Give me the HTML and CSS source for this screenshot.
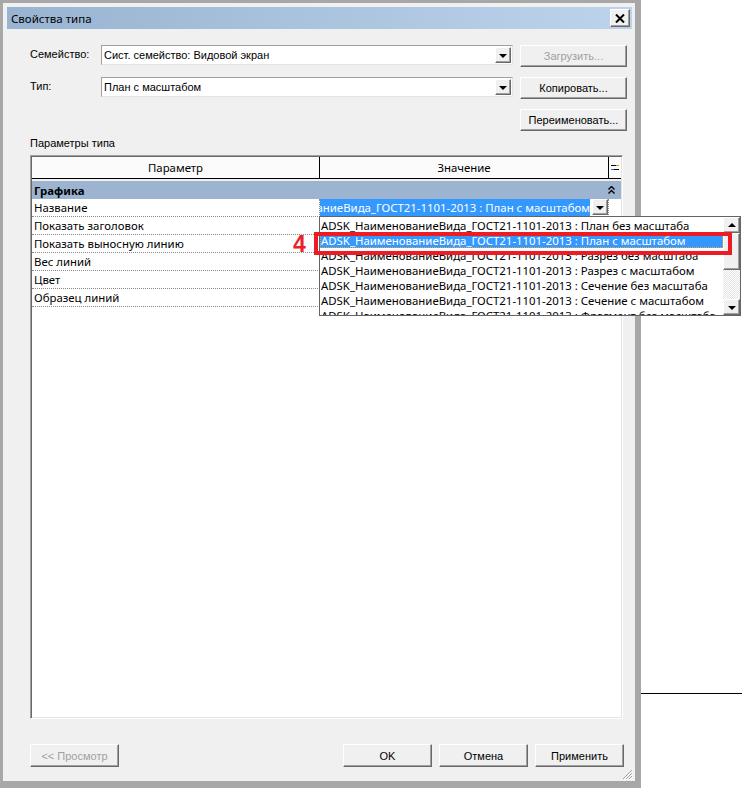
FILE: index.html
```html
<!DOCTYPE html>
<html lang="ru">
<head>
  <meta charset="UTF-8">
  <title>Свойства типа</title>
  <link rel="stylesheet" href="styles.css">
</head>
<body>
  <div class="page">
    <div class="dialog">
      <div class="titlebar">
        <span class="title">Свойства типа</span>
        <button class="close-btn" aria-label="Закрыть">
          <svg width="10" height="9" viewBox="0 0 10 9"><path d="M1 0.5 L9 8.5 M9 0.5 L1 8.5" stroke="#000" stroke-width="2"/></svg>
        </button>
      </div>

      <div class="dialog-body">
        <div class="form-grid">
          <label class="field-label">Семейство:</label>
          <div class="combo">
            <span class="combo-text">Сист. семейство: Видовой экран</span>
            <span class="combo-arrow"><i class="tri-down"></i></span>
          </div>
          <button class="btn" disabled>Загрузить...</button>

          <label class="field-label">Тип:</label>
          <div class="combo">
            <span class="combo-text">План с масштабом</span>
            <span class="combo-arrow"><i class="tri-down"></i></span>
          </div>
          <button class="btn">Копировать...</button>

          <span></span>
          <span></span>
          <button class="btn">Переименовать...</button>
        </div>

        <div class="section-label">Параметры типа</div>

        <div class="prop-grid">
          <div class="grid-head">
            <div class="head-cell">Параметр</div>
            <div class="head-cell">Значение</div>
            <div class="head-cell head-eq">
              <svg width="8" height="7" viewBox="0 0 8 7">
                <rect x="0" y="1" width="8" height="1" fill="#000"/>
                <rect x="5" y="1" width="3" height="1" fill="#e08a1e"/>
                <rect x="0" y="5" width="8" height="1" fill="#000"/>
                <rect x="0" y="5" width="3" height="1" fill="#2a6ad8"/>
              </svg>
            </div>
          </div>
          <div class="grid-gap"></div>
          <div class="group-row">
            <span class="group-name">Графика</span>
            <svg class="collapse" width="7" height="8" viewBox="0 0 7 8">
              <path d="M0.5 3.5 L3.5 0.5 L6.5 3.5 M0.5 7.5 L3.5 4.5 L6.5 7.5" stroke="#000" stroke-width="1.4" fill="none"/>
            </svg>
          </div>

          <div class="prop-row">
            <div class="prop-name">Название</div>
            <div class="prop-value">
              <div class="value-edit"><span>ADSK_НаименованиеВида_ГОСТ21-1101-2013 : План с масштабом</span></div>
              <span class="value-arrow"><i class="tri-down"></i></span>
            </div>
            <div></div>
          </div>
          <div class="prop-row">
            <div class="prop-name">Показать заголовок</div>
            <div class="prop-value"></div>
            <div></div>
          </div>
          <div class="prop-row">
            <div class="prop-name">Показать выносную линию</div>
            <div class="prop-value"></div>
            <div></div>
          </div>
          <div class="prop-row">
            <div class="prop-name">Вес линий</div>
            <div class="prop-value"></div>
            <div></div>
          </div>
          <div class="prop-row">
            <div class="prop-name">Цвет</div>
            <div class="prop-value"></div>
            <div></div>
          </div>
          <div class="prop-row">
            <div class="prop-name">Образец линий</div>
            <div class="prop-value"></div>
            <div></div>
          </div>
        </div>

        <div class="footer">
          <button class="btn btn-wide" disabled>&lt;&lt; Просмотр</button>
          <div class="footer-right">
            <button class="btn btn-wide">OK</button>
            <button class="btn btn-wide">Отмена</button>
            <button class="btn btn-wide">Применить</button>
          </div>
        </div>
      </div>

      <svg class="grip" width="11" height="11" viewBox="0 0 11 11">
        <path d="M10 1 L1 10 M10 4 L4 10 M10 7 L7 10" stroke="#a0a0a0" stroke-width="1"/>
        <path d="M11 2 L2 11 M11 5 L5 11 M11 8 L8 11" stroke="#fff" stroke-width="1"/>
      </svg>
    </div>

    <div class="side">
      <div class="side-line"></div>
    </div>
  </div>

  <!-- open drop-down of the "Название" value -->
  <div class="dropdown-list">
    <div class="list-items">
      <div class="list-item">ADSK_НаименованиеВида_ГОСТ21-1101-2013 : План без масштаба</div>
      <div class="list-item selected">ADSK_НаименованиеВида_ГОСТ21-1101-2013 : План с масштабом</div>
      <div class="list-item">ADSK_НаименованиеВида_ГОСТ21-1101-2013 : Разрез без масштаба</div>
      <div class="list-item">ADSK_НаименованиеВида_ГОСТ21-1101-2013 : Разрез с масштабом</div>
      <div class="list-item">ADSK_НаименованиеВида_ГОСТ21-1101-2013 : Сечение без масштаба</div>
      <div class="list-item">ADSK_НаименованиеВида_ГОСТ21-1101-2013 : Сечение с масштабом</div>
      <div class="list-item">ADSK_НаименованиеВида_ГОСТ21-1101-2013 : Фрагмент без масштаба</div>
    </div>
    <div class="scrollbar">
      <span class="scroll-btn"><i class="tri-up"></i></span>
      <span class="scroll-thumb"></span>
      <span class="scroll-track"></span>
      <span class="scroll-btn"><i class="tri-down"></i></span>
    </div>
  </div>

  <div class="callout-box"></div>
  <div class="callout-num">4</div>
</body>
</html>
```

FILE: styles.css
```css
body {
  margin: 0;
  width: 742px;
  height: 788px;
  overflow: hidden;
  position: relative;
  background: #fff;
  font-family: 'Liberation Sans', Arial, sans-serif;
  font-size: 11px;
  color: #000;
}

.page {
  display: flex;
}

.dialog {
  position: relative;
  width: 641px;
  height: 788px;
  box-sizing: border-box;
  display: flex;
  flex-direction: column;
  background: #f0f0f0;
  border-style: solid;
  border-color: #a7a7a7;
  border-width: 3px 6px 7px 3px;
}

.titlebar {
  height: 22px;
  margin: 4px 3px 0 4px;
  display: flex;
  align-items: center;
  justify-content: space-between;
  background: linear-gradient(to right, #99b4d1, #bcd3eb);
}

.title {
  padding-left: 4px;
  font-family: 'Noto Sans', sans-serif;
  font-size: 11.5px;
}

.close-btn {
  width: 20px;
  height: 18px;
  margin-right: 2px;
  padding: 0;
  display: flex;
  align-items: center;
  justify-content: center;
  background: #f0f0f0;
  border: 1px solid;
  border-color: #fff #696969 #696969 #fff;
  box-shadow: inset -1px -1px #a0a0a0;
}

.dialog-body {
  flex: 1;
  display: flex;
  flex-direction: column;
  padding: 16px 0 0 27px;
}

/* top fields */
.form-grid {
  display: grid;
  grid-template-columns: 71px 419px 107px;
  grid-auto-rows: 22px;
  row-gap: 10px;
  align-items: start;
}

.field-label {
  line-height: 18px;
}

.combo {
  width: 412px;
  height: 20px;
  box-sizing: border-box;
  display: flex;
  align-items: center;
  justify-content: space-between;
  background: #fff;
  border: 1px solid;
  border-color: #a0a0a0 #e3e3e3 #e3e3e3 #a0a0a0;
}

.combo-text {
  padding-left: 2px;
}

.combo-arrow,
.value-arrow,
.scroll-btn {
  display: flex;
  align-items: center;
  justify-content: center;
  box-sizing: border-box;
  background: #f0f0f0;
  border: 1px solid;
  border-color: #fff #696969 #696969 #fff;
  box-shadow: inset -1px -1px #a0a0a0;
}

.combo-arrow {
  width: 16px;
  height: 16px;
  margin-right: 1px;
}

.tri-down {
  width: 0;
  height: 0;
  border-left: 4px solid transparent;
  border-right: 4px solid transparent;
  border-top: 4px solid #000;
  margin-top: 1px;
}

.tri-up {
  width: 0;
  height: 0;
  border-left: 4px solid transparent;
  border-right: 4px solid transparent;
  border-bottom: 4px solid #000;
}

.btn {
  height: 22px;
  padding: 0;
  box-sizing: border-box;
  background: #f0f0f0;
  border: 1px solid;
  border-color: #fff #696969 #696969 #fff;
  box-shadow: inset -1px -1px #a0a0a0;
  font-family: 'Liberation Sans', Arial, sans-serif;
  font-size: 11px;
  color: #000;
}

.btn:disabled {
  color: #a0a0a0;
}

.section-label {
  margin-top: 5px;
  height: 14px;
  line-height: 14px;
}

/* property grid */
.prop-grid {
  margin-top: 5px;
  width: 593px;
  height: 564px;
  box-sizing: border-box;
  padding: 1px;
  background: #fff;
  border: 1px solid;
  border-color: #a0a0a0 #fff #fff #a0a0a0;
  box-shadow: inset 1px 1px #696969, inset -1px -1px #e3e3e3;
  font-family: 'Noto Sans', sans-serif;
  font-size: 11.4px;
}

.grid-head {
  display: grid;
  grid-template-columns: 288px 289px 12px;
  height: 22px;
  box-sizing: border-box;
  background: #fbfbfb;
  border-bottom: 1px solid #000;
}

.head-cell {
  display: flex;
  align-items: center;
  justify-content: center;
  border-right: 1px solid #000;
}

.head-eq {
  border-right: none;
}

.grid-gap {
  height: 2px;
  background: #f0f0f0;
}

.group-row {
  height: 18px;
  display: flex;
  align-items: center;
  justify-content: space-between;
  padding: 0 6px 0 2px;
  background: #9db4d1;
}

.group-name {
  font-weight: bold;
}

.prop-row {
  display: grid;
  grid-template-columns: 288px 289px 12px;
  height: 18px;
}

.prop-name,
.prop-value {
  box-sizing: border-box;
  border-right: 1px dotted #8a8a8a;
  border-bottom: 1px dotted #8a8a8a;
}

.prop-name {
  padding-left: 2px;
  line-height: 17px;
  white-space: nowrap;
}

.prop-value {
  display: flex;
  align-items: flex-start;
}

.value-edit {
  width: 270px;
  height: 17px;
  display: flex;
  justify-content: flex-end;
  overflow: hidden;
  white-space: nowrap;
}

.value-edit span {
  flex-shrink: 0;
  line-height: 17px;
  background: #3399ff;
  color: #fff;
}

.value-arrow {
  width: 16px;
  height: 16px;
  margin-left: 2px;
}

/* bottom buttons */
.footer {
  margin-top: 25px;
  width: 594px;
  display: flex;
  justify-content: space-between;
}

.footer-right {
  display: flex;
  gap: 7px;
}

.btn-wide {
  width: 89px;
  height: 23px;
}

.grip {
  position: absolute;
  right: 2px;
  bottom: 1px;
}

.side {
  flex: 1;
  padding-top: 693px;
}

.side-line {
  height: 1px;
  background: #000;
}

/* dropdown overlay */
.dropdown-list {
  position: absolute;
  left: 319px;
  top: 216px;
  width: 422px;
  height: 100px;
  box-sizing: border-box;
  display: flex;
  background: #fff;
  border: 1px solid #646464;
  font-family: 'Noto Sans', sans-serif;
  font-size: 11.4px;
}

.list-items {
  flex: 1;
  overflow: hidden;
  padding-top: 1px;
}

.list-item {
  height: 15px;
  line-height: 15px;
  padding-left: 1px;
  white-space: nowrap;
}

.list-item.selected {
  background: #3399ff;
  color: #fff;
  outline: 1px dotted #f0a040;
  outline-offset: -1px;
}

.scrollbar {
  width: 17px;
  display: flex;
  flex-direction: column;
}

.scroll-btn {
  height: 16px;
}

.scroll-thumb {
  height: 37px;
  box-sizing: border-box;
  background: #f0f0f0;
  border: 1px solid;
  border-color: #fff #696969 #696969 #fff;
  box-shadow: inset -1px -1px #a0a0a0;
}

.scroll-track {
  flex: 1;
  background: repeating-conic-gradient(#fff 0 25%, #e4e4e4 0 50%) 0 0 / 2px 2px;
}

.callout-box {
  position: absolute;
  left: 314px;
  top: 232px;
  width: 418px;
  height: 23px;
  box-sizing: border-box;
  border: 4px solid #ed1c24;
}

.callout-num {
  position: absolute;
  left: 293px;
  top: 233px;
  font-family: 'Liberation Sans', Arial, sans-serif;
  font-size: 23px;
  line-height: 23px;
  font-weight: bold;
  color: #e8222a;
}
```
